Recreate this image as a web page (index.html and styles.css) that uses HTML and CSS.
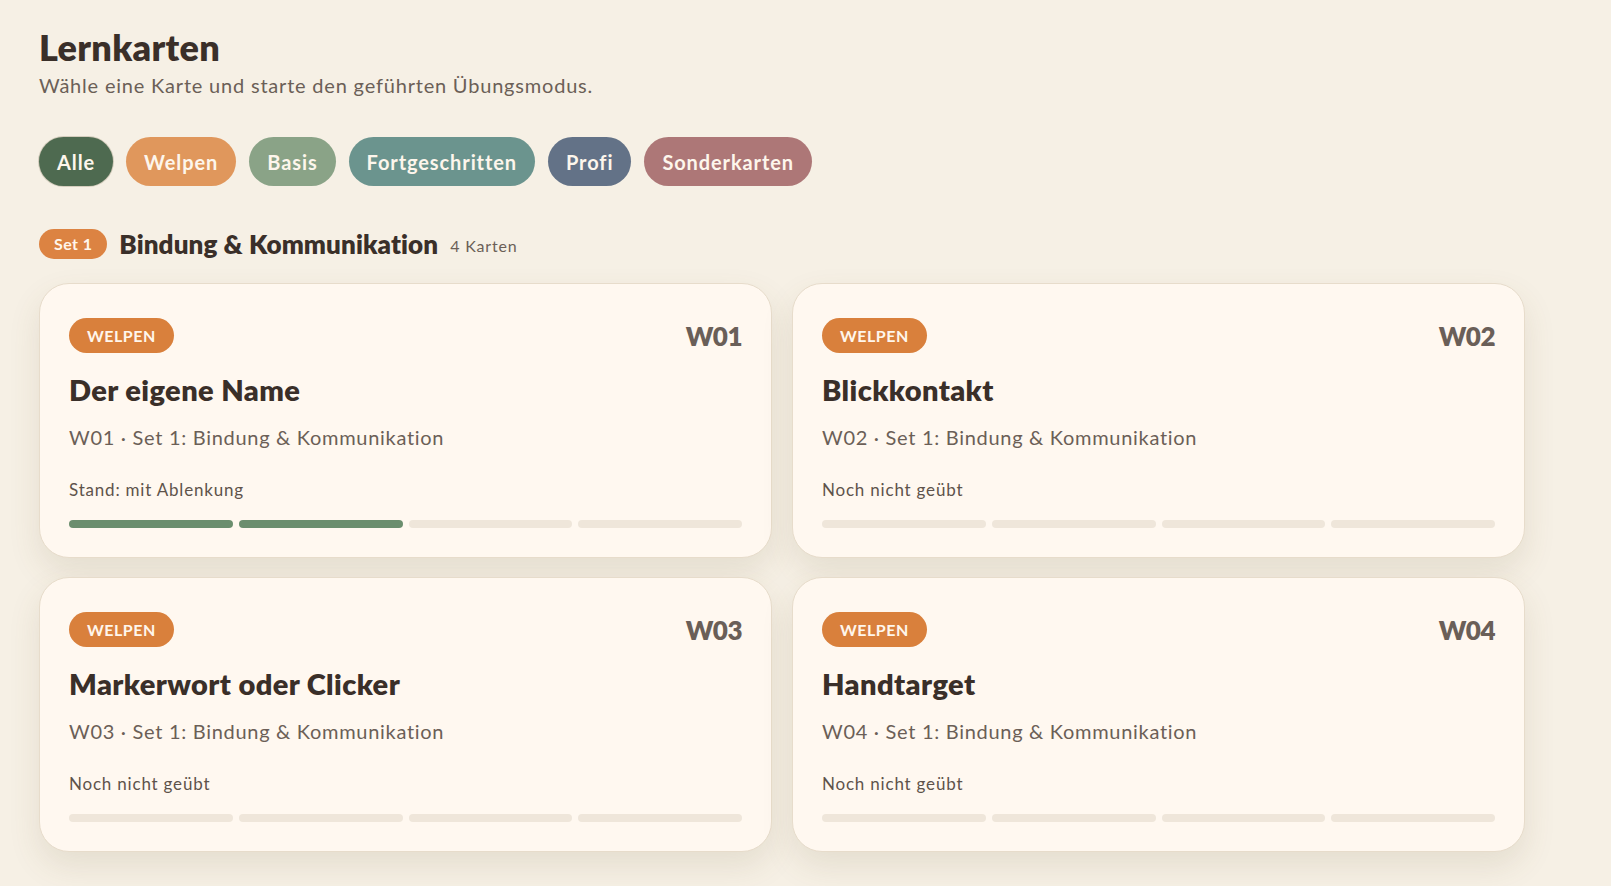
FILE: index.html
```html
<!DOCTYPE html>
<html lang="de">

<head>
    <meta charset="UTF-8">
    <title>Lernkarten</title>
    <link rel="stylesheet" href="styles.css">
</head>

<body>
    <main class="page">
        <header class="page-head">
            <h1>Lernkarten</h1>
            <p class="lead">Wähle eine Karte und starte den geführten Übungsmodus.</p>
        </header>

        <nav class="filters">
            <button class="filter filter-all active">Alle</button>
            <button class="filter filter-welpen">Welpen</button>
            <button class="filter filter-basis">Basis</button>
            <button class="filter filter-fort">Fortgeschritten</button>
            <button class="filter filter-profi">Profi</button>
            <button class="filter filter-sonder">Sonderkarten</button>
        </nav>

        <section class="set">
            <div class="set-head">
                <span class="set-badge">Set 1</span>
                <h2>Bindung &amp; Kommunikation</h2>
                <span class="set-count">4 Karten</span>
            </div>

            <div class="card-grid">
                <article class="card">
                    <div class="card-top">
                        <span class="level">Welpen</span>
                        <span class="code">W01</span>
                    </div>
                    <h3>Der eigene Name</h3>
                    <p class="meta">W01 · Set 1: Bindung &amp; Kommunikation</p>
                    <p class="status">Stand: mit Ablenkung</p>
                    <div class="progress">
                        <span class="step done"></span>
                        <span class="step done"></span>
                        <span class="step"></span>
                        <span class="step"></span>
                    </div>
                </article>

                <article class="card">
                    <div class="card-top">
                        <span class="level">Welpen</span>
                        <span class="code">W02</span>
                    </div>
                    <h3>Blickkontakt</h3>
                    <p class="meta">W02 · Set 1: Bindung &amp; Kommunikation</p>
                    <p class="status">Noch nicht geübt</p>
                    <div class="progress">
                        <span class="step"></span>
                        <span class="step"></span>
                        <span class="step"></span>
                        <span class="step"></span>
                    </div>
                </article>

                <article class="card">
                    <div class="card-top">
                        <span class="level">Welpen</span>
                        <span class="code">W03</span>
                    </div>
                    <h3>Markerwort oder Clicker</h3>
                    <p class="meta">W03 · Set 1: Bindung &amp; Kommunikation</p>
                    <p class="status">Noch nicht geübt</p>
                    <div class="progress">
                        <span class="step"></span>
                        <span class="step"></span>
                        <span class="step"></span>
                        <span class="step"></span>
                    </div>
                </article>

                <article class="card">
                    <div class="card-top">
                        <span class="level">Welpen</span>
                        <span class="code">W04</span>
                    </div>
                    <h3>Handtarget</h3>
                    <p class="meta">W04 · Set 1: Bindung &amp; Kommunikation</p>
                    <p class="status">Noch nicht geübt</p>
                    <div class="progress">
                        <span class="step"></span>
                        <span class="step"></span>
                        <span class="step"></span>
                        <span class="step"></span>
                    </div>
                </article>
            </div>
        </section>
    </main>
</body>

</html>
```

FILE: styles.css
```css
body {
    margin: 0;
    background-color: #f6f0e5;
    color: #3a2f29;
    font-family: Lato, "Open Sans", sans-serif;
}

.page {
    padding: 26px 39px 40px;
}

/* Titel + Untertitel */
.page-head h1 {
    margin: 0;
    font-size: 36px;
    font-weight: 800;
    line-height: 42px;
    letter-spacing: 0.3px;
}

.lead {
    margin: 5px 0 0;
    font-size: 20px;
    letter-spacing: 0.8px;
    color: #6b5f57;
}

/* Filter-Pills */
.filters {
    display: flex;
    gap: 13px;
    margin-top: 40px;
}

.filter {
    height: 49px;
    padding: 0 18px;
    border: none;
    border-radius: 25px;
    color: #fdf6ec;
    font-family: inherit;
    font-size: 20px;
    font-weight: 700;
    letter-spacing: 0.9px;
    cursor: pointer;
}

.filter.active {
    box-shadow: 0 0 0 1px #d4cdbd;
}

.filter-all { background-color: #4e6a50; }
.filter-welpen { background-color: #e0975c; }
.filter-basis { background-color: #8aa387; }
.filter-fort { background-color: #6b948e; }
.filter-profi { background-color: #637287; }
.filter-sonder { background-color: #ad7777; }

/* Set-Ueberschrift */
.set-head {
    display: flex;
    align-items: center;
    gap: 12px;
    margin-top: 42px;
}

.set-badge {
    padding: 0 15px;
    height: 30px;
    line-height: 30px;
    border-radius: 15px;
    background-color: #dc8342;
    color: #fff6ec;
    font-size: 16px;
    font-weight: 700;
    letter-spacing: 0.4px;
}

.set-head h2 {
    margin: 0;
    font-size: 26px;
    font-weight: 800;
    letter-spacing: 0.1px;
}

.set-count {
    font-size: 16px;
    letter-spacing: 0.8px;
    color: #6b5f57;
    padding-top: 2px;
}

/* Karten */
.card-grid {
    display: grid;
    grid-template-columns: repeat(2, 733px);
    gap: 19px 20px;
    margin-top: 23px;
}

.card {
    background-color: #fff8f0;
    border: 1px solid #e7dccb;
    border-radius: 30px;
    padding: 32px 29px 29px;
    box-shadow: 0 14px 32px rgba(110, 90, 50, 0.12);
}

.card-top {
    display: flex;
    justify-content: space-between;
    align-items: center;
    height: 39px;
}

.level {
    padding: 0 18px;
    height: 35px;
    line-height: 35px;
    border-radius: 18px;
    background-color: #d9803c;
    color: #fff6ec;
    font-size: 16px;
    font-weight: 700;
    text-transform: uppercase;
    letter-spacing: 0.5px;
}

.code {
    font-size: 26px;
    font-weight: 800;
    letter-spacing: -0.5px;
    color: #6a5f58;
}

.card h3 {
    margin: 17px 0 0;
    font-size: 29px;
    font-weight: 800;
    line-height: 36px;
    letter-spacing: 0.4px;
}

.meta {
    margin: 16px 0 0;
    font-size: 20px;
    line-height: 26px;
    letter-spacing: 0.7px;
    color: #6b5f57;
}

.status {
    margin: 29px 0 0;
    font-size: 17px;
    line-height: 22px;
    letter-spacing: 0.8px;
    color: #5e534b;
}

.progress {
    display: flex;
    gap: 6px;
    margin-top: 19px;
}

.step {
    flex: 1;
    height: 8px;
    border-radius: 4px;
    background-color: #efe6da;
}

.step.done {
    background-color: #6b8e6e;
}
```
